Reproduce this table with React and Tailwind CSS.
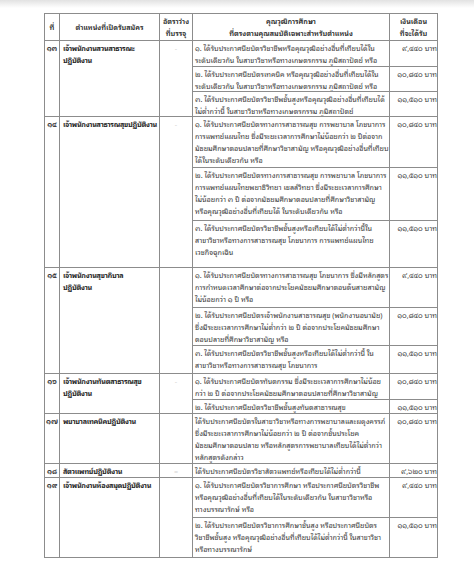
import React from "react";

const rows = [
  {
    no: "๑๓",
    name: ["เจ้าพนักงานสวนสาธารณะ", "ปฏิบัติงาน"],
    mark: "-",
    items: [
      {
        h: "h-[26px]",
        pay: "๙,๔๔๐ บาท",
        lines: [
          "๑. ได้รับประกาศนียบัตรวิชาชีพหรือคุณวุฒิอย่างอื่นที่เทียบได้ใน",
          "ระดับเดียวกัน ในสาขาวิชาหรือทางเกษตรกรรม ภูมิสถาปัตย์ หรือ",
        ],
      },
      {
        h: "h-[25px]",
        pay: "๑๐,๘๔๐ บาท",
        lines: [
          "๒. ได้รับประกาศนียบัตรเทคนิค หรือคุณวุฒิอย่างอื่นที่เทียบได้ใน",
          "ระดับเดียวกัน ในสาขาวิชาหรือทางเกษตรกรรม ภูมิสถาปัตย์ หรือ",
        ],
      },
      {
        h: "h-[25px]",
        pay: "๑๑,๕๑๐ บาท",
        lines: [
          "๓. ได้รับประกาศนียบัตรวิชาชีพชั้นสูงหรือคุณวุฒิอย่างอื่นที่เทียบได้",
          "ไม่ต่ำกว่านี้ ในสาขาวิชาหรือทางเกษตรกรรม ภูมิสถาปัตย์",
        ],
      },
    ],
  },
  {
    no: "๑๔",
    name: ["เจ้าพนักงานสาธารณสุขปฏิบัติงาน"],
    mark: "-",
    items: [
      {
        h: "h-[51px]",
        pay: "๑๐,๘๔๐ บาท",
        lines: [
          "๑. ได้รับประกาศนียบัตรทางการสาธารณสุข การพยาบาล โภชนาการ",
          "การแพทย์แผนไทย ซึ่งมีระยะเวลาการศึกษาไม่น้อยกว่า ๒ ปีต่อจาก",
          "มัธยมศึกษาตอนปลายที่ศึกษาวิชาสามัญ หรือคุณวุฒิอย่างอื่นที่เทียบ",
          "ได้ในระดับเดียวกัน หรือ",
        ],
      },
      {
        h: "h-[53px]",
        pay: "๑๑,๕๑๐ บาท",
        lines: [
          "๒. ได้รับประกาศนียบัตรทางการสาธารณสุข การพยาบาล โภชนาการ",
          "การแพทย์แผนไทยพยาธิวิทยา เซลล์วิทยา ซึ่งมีระยะเวลาการศึกษา",
          "ไม่น้อยกว่า ๓ ปี ต่อจากมัธยมศึกษาตอนปลายที่ศึกษาวิชาสามัญ",
          "หรือคุณวุฒิอย่างอื่นที่เทียบได้  ในระดับเดียวกัน หรือ",
        ],
      },
      {
        h: "h-[47px]",
        pay: "๑๑,๕๑๐ บาท",
        lines: [
          "๓. ได้รับประกาศนียบัตรวิชาชีพชั้นสูงหรือเทียบได้ไม่ต่ำกว่านี้ใน",
          "สาขาวิชาหรือทางการสาธารณสุข โภชนาการ การแพทย์แผนไทย",
          "เวชกิจฉุกเฉิน",
        ],
      },
    ],
  },
  {
    no: "๑๕",
    name: ["เจ้าพนักงานสุขาภิบาล", "ปฏิบัติงาน"],
    mark: "",
    items: [
      {
        h: "h-[40px]",
        pay: "๙,๔๔๐ บาท",
        lines: [
          "๑. ได้รับประกาศนียบัตรทางการสาธารณสุข โภชนาการ ซึ่งมีหลักสูตร",
          "การกำหนดเวลาศึกษาต่อจากประโยคมัธยมศึกษาตอนต้นสายสามัญ",
          "ไม่น้อยกว่า ๑ ปี หรือ",
        ],
      },
      {
        h: "h-[38px]",
        pay: "๑๐,๘๔๐ บาท",
        lines: [
          "๒. ได้รับประกาศนียบัตรเจ้าพนักงานสาธารณสุข (พนักงานอนามัย)",
          "ซึ่งมีระยะเวลาการศึกษาไม่ต่ำกว่า ๒ ปี ต่อจากประโยคมัธยมศึกษา",
          "ตอนปลายที่ศึกษาวิชาสามัญ หรือ",
        ],
      },
      {
        h: "h-[28px]",
        pay: "๑๑,๕๑๐ บาท",
        lines: [
          "๓. ได้รับประกาศนียบัตรวิชาชีพชั้นสูงหรือเทียบได้ไม่ต่ำกว่านี้ ใน",
          "สาขาวิชาหรือทางการสาธารณสุข โภชนาการ",
        ],
      },
    ],
  },
  {
    no: "๑๖",
    name: ["เจ้าพนักงานทันตสาธารณสุข", "ปฏิบัติงาน"],
    mark: "-",
    items: [
      {
        h: "h-[26px]",
        pay: "๑๐,๘๔๐ บาท",
        lines: [
          "๑. ได้รับประกาศนียบัตรทันตกรรม ซึ่งมีระยะเวลาการศึกษาไม่น้อย",
          "กว่า ๒ ปี ต่อจากประโยคมัธยมศึกษาตอนปลายที่ศึกษาวิชาสามัญ",
        ],
      },
      {
        h: "h-[14px]",
        pay: "๑๑,๕๑๐ บาท",
        lines: ["๒. ได้รับประกาศนียบัตรวิชาชีพชั้นสูงทันตสาธารณสุข"],
      },
    ],
  },
  {
    no: "๑๗",
    name: ["พยาบาลเทคนิคปฏิบัติงาน"],
    mark: "",
    items: [
      {
        h: "h-[50px]",
        pay: "๑๐,๘๔๐ บาท",
        lines: [
          "ได้รับประกาศนียบัตรในสาขาวิชาหรือทางการพยาบาลและผดุงครรภ์",
          "ซึ่งมีระยะเวลาการศึกษาไม่น้อยกว่า ๒ ปี ต่อจากชั้นประโยค",
          "มัธยมศึกษาตอนปลาย หรือหลักสูตรการพยาบาลเทียบได้ไม่ต่ำกว่า",
          "หลักสูตรดังกล่าว",
        ],
      },
    ],
  },
  {
    no: "๑๘",
    name: ["สัตวแพทย์ปฏิบัติงาน"],
    mark: "=",
    items: [
      {
        h: "h-[14px]",
        pay: "๙,๖๒๐ บาท",
        lines: ["ได้รับประกาศนียบัตรวิชาสัตวแพทย์หรือเทียบได้ไม่ต่ำกว่านี้"],
      },
    ],
  },
  {
    no: "๑๙",
    name: ["เจ้าพนักงานห้องสมุดปฏิบัติงาน"],
    mark: "",
    items: [
      {
        h: "h-[40px]",
        pay: "๙,๔๔๐ บาท",
        lines: [
          "๑. ได้รับประกาศนียบัตรวิชาการศึกษา หรือประกาศนียบัตรวิชาชีพ",
          "หรือคุณวุฒิอย่างอื่นที่เทียบได้ในระดับเดียวกัน ในสาขาวิชาหรือ",
          "ทางบรรณารักษ์ หรือ",
        ],
      },
      {
        h: "h-[40px]",
        pay: "๑๑,๕๑๐ บาท",
        lines: [
          "๒. ได้รับประกาศนียบัตรวิชาการศึกษาชั้นสูง หรือประกาศนียบัตร",
          "วิชาชีพชั้นสูง หรือคุณวุฒิอย่างอื่นที่เทียบได้ไม่ต่ำกว่านี้ ในสาขาวิชา",
          "หรือทางบรรณารักษ์",
        ],
      },
    ],
  },
];

const line = "border-l border-t border-[#8c8c8c] overflow-hidden";

function Lines({ lines }) {
  return (
    <div className="whitespace-nowrap">
      {lines.map((l, i) => (
        <div key={i}>{l}</div>
      ))}
    </div>
  );
}

function Group({ r }) {
  return (
    <div className="flex">
      <div className={`${line} w-[15px] shrink-0 text-center font-bold pt-px`}>{r.no}</div>
      <div className={`${line} w-[100px] shrink-0 pl-[3px] pt-px font-bold tracking-[-0.3px] text-[#262626]`}>
        <Lines lines={r.name} />
      </div>
      <div className={`${line} w-[33px] shrink-0 text-center text-[#d4d4d4] pt-px`}>{r.mark}</div>
      <div className="flex flex-col w-[245px] shrink-0">
        {r.items.map((it, i) => (
          <div key={i} className={`flex ${it.h}`}>
            <div className={`${line} w-[197px] shrink-0 pl-[2px] py-px`}>
              <Lines lines={it.lines} />
            </div>
            <div className={`${line} w-[48px] shrink-0 pt-px text-right whitespace-nowrap`}>{it.pay}</div>
          </div>
        ))}
      </div>
    </div>
  );
}

export default function App() {
  return (
    <div
      className="w-[474px] h-[564px] bg-white overflow-hidden text-[#3c3c3c] text-[7.2px] leading-[12px]"
      style={{ fontFamily: '"Noto Sans Thai Looped", Loma, Garuda, Kinnari, "Noto Sans", sans-serif' }}
    >
      <div className="h-[8px] bg-gradient-to-b from-[#e2e2e2] to-white" />
      <div className="pt-[5px] pl-[44px]">
        <div className="w-[394px] border-r border-b border-[#8c8c8c]">
          <div className="flex h-[27px] font-semibold text-[#262626]">
            <div className={`${line} w-[15px] shrink-0 flex items-center justify-center`}>ที่</div>
            <div className={`${line} w-[100px] shrink-0 flex items-center justify-center`}>ตำแหน่งที่เปิดรับสมัคร</div>
            <div className={`${line} w-[33px] shrink-0 flex items-center justify-center text-center whitespace-nowrap`}>
              อัตราว่าง
              <br />
              ที่บรรจุ
            </div>
            <div className={`${line} w-[197px] shrink-0 flex flex-col items-center justify-center`}>
              <div>คุณวุฒิการศึกษา</div>
              <div>ที่ตรงตามคุณสมบัติเฉพาะสำหรับตำแหน่ง</div>
            </div>
            <div className={`${line} w-[48px] shrink-0 flex flex-col items-center justify-center`}>
              <div>เงินเดือน</div>
              <div>ที่จะได้รับ</div>
            </div>
          </div>
          {rows.map((r) => (
            <Group key={r.no} r={r} />
          ))}
        </div>
      </div>
    </div>
  );
}
